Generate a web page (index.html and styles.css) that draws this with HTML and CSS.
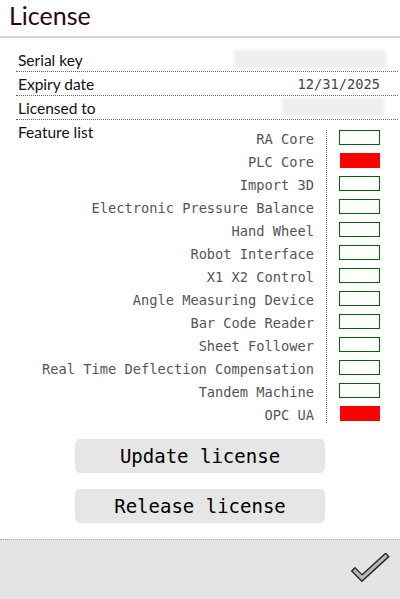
FILE: index.html
```html
<!DOCTYPE html>
<html>
<head>
<meta charset="utf-8">
<link rel="stylesheet" href="styles.css">
</head>
<body>
<div class="page">
  <header class="header"><h1 class="title">License</h1></header>
  <main class="content">
    <div class="info-row"><span class="label">Serial key</span><span class="blur blur-serial"></span></div>
    <div class="info-row"><span class="label">Expiry date</span><span class="value">12/31/2025</span></div>
    <div class="info-row"><span class="label">Licensed to</span><span class="blur blur-owner"></span></div>
    <div class="features">
      <span class="divider"></span>
      <div class="fname first"><span class="label feat-title">Feature list</span><span>RA Core</span></div><span class="box on"></span>
      <span class="fname">PLC Core</span><span class="box off"></span>
      <span class="fname">Import 3D</span><span class="box on"></span>
      <span class="fname">Electronic Pressure Balance</span><span class="box on"></span>
      <span class="fname">Hand Wheel</span><span class="box on"></span>
      <span class="fname">Robot Interface</span><span class="box on"></span>
      <span class="fname">X1 X2 Control</span><span class="box on"></span>
      <span class="fname">Angle Measuring Device</span><span class="box on"></span>
      <span class="fname">Bar Code Reader</span><span class="box on"></span>
      <span class="fname">Sheet Follower</span><span class="box on"></span>
      <span class="fname">Real Time Deflection Compensation</span><span class="box on"></span>
      <span class="fname">Tandem Machine</span><span class="box on"></span>
      <span class="fname">OPC UA</span><span class="box off"></span>
    </div>
    <div class="actions">
      <button class="btn">Update license</button>
      <button class="btn">Release license</button>
    </div>
  </main>
  <footer class="footer">
    <svg class="check" width="40" height="32" viewBox="0 0 40 32">
      <polyline points="5,18 12,25 35.5,3.5" fill="none" stroke="#262626" stroke-width="6" stroke-linecap="square" stroke-linejoin="miter"/>
      <polyline points="5,18 12,25 35.5,3.5" fill="none" stroke="#b8b8b8" stroke-width="3.2" stroke-linecap="square" stroke-linejoin="miter"/>
    </svg>
  </footer>
</div>
</body>
</html>
```
FILE: styles.css
```css
html, body {
  margin: 0;
  padding: 0;
  background: #fff;
}
.page {
  width: 400px;
  height: 599px;
  display: flex;
  flex-direction: column;
  overflow: hidden;
}
.page > * {
  flex-shrink: 0;
}
.header {
  height: 36px;
  border-bottom: 2px solid #d4d4d4;
  display: flex;
  align-items: flex-start;
  padding-left: 9px;
}
.title {
  margin: 0;
  font-family: Lato, "Open Sans", sans-serif;
  font-weight: 400;
  font-size: 25px;
  line-height: 30px;
  color: #2a0808;
}
.content {
  padding: 10px 2px 0 16px;
}
.info-row {
  height: 23px;
  border-bottom: 1px dotted #666;
  display: flex;
  justify-content: space-between;
  align-items: flex-end;
}
.label {
  font-family: Lato, "Open Sans", sans-serif;
  font-size: 15.5px;
  line-height: 18px;
  color: #111;
  padding-left: 2px;
  padding-bottom: 2px;
}
.value {
  font-family: "DejaVu Sans Mono", monospace;
  font-size: 13.7px;
  line-height: 18px;
  color: #444;
  padding-right: 18px;
  padding-bottom: 2px;
}
.blur {
  align-self: center;
  height: 19px;
  background: #efefef;
  filter: blur(1.5px);
}
.blur-serial {
  width: 152px;
  margin-right: 12px;
}
.blur-owner {
  width: 102px;
  margin-right: 14px;
}
.features {
  display: grid;
  grid-template-columns: 1fr 1px 41px;
  grid-auto-rows: 23px;
  column-gap: 12px;
  padding-top: 6px;
  margin-right: 18px;
}
.divider {
  grid-column: 2;
  grid-row: 1 / 14;
  border-left: 1px dotted #666;
  margin: 4px 0 2px;
}
.fname {
  grid-column: 1;
  justify-self: end;
  align-self: center;
  font-family: "DejaVu Sans Mono", monospace;
  font-size: 13.7px;
  line-height: 16px;
  color: #555;
  margin-top: 2px;
}
.fname.first {
  justify-self: stretch;
  display: flex;
  justify-content: space-between;
  align-items: flex-end;
}
.feat-title {
  align-self: flex-start;
  margin-top: -8px;
  padding-bottom: 0;
}
.box {
  grid-column: 3;
  align-self: start;
  margin-top: 4px;
  height: 15px;
  box-sizing: border-box;
}
.box.on {
  border: 1px solid #006400;
  background: #fff;
}
.box.off {
  background: #ff0000;
  margin-left: 1px;
}
.actions {
  display: flex;
  flex-direction: column;
  align-items: center;
  gap: 16px;
  margin-top: 14px;
  padding-right: 14px;
}
.btn {
  width: 250px;
  height: 34px;
  border: none;
  border-radius: 5px;
  background: #e6e6e6;
  font-family: "DejaVu Sans Mono", monospace;
  font-size: 19px;
  color: #000;
  padding: 0;
  margin: 0;
}
.footer {
  margin-top: auto;
  height: 46px;
  border-top: 1px dotted #a0a0a0;
  background: #e4e4e4;
  display: flex;
  justify-content: flex-end;
  align-items: flex-start;
  padding: 13px 10px 0 0;
}
.check {
  display: block;
}
```
